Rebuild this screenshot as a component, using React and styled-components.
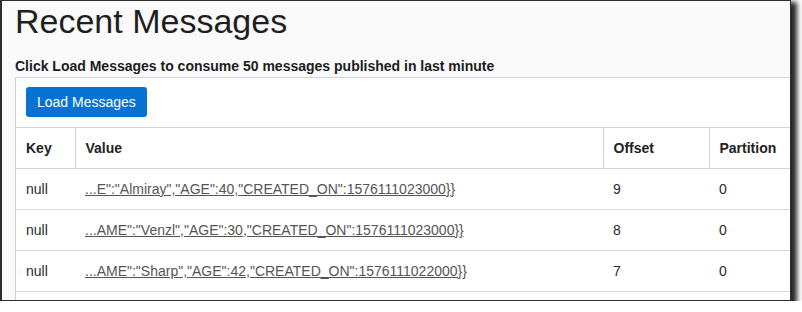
import React from 'react';
import styled, { createGlobalStyle } from 'styled-components';

const GlobalStyle = createGlobalStyle`
    html, body {
        margin: 0;
        padding: 0;
        background: #ffffff;
        font-family: "Liberation Sans", Arial, Helvetica, sans-serif;
    }
`;

const messages = [
    { key: 'null', value: '...E":"Almiray","AGE":40,"CREATED_ON":1576111023000}}', offset: 9, partition: 0 },
    { key: 'null', value: '...AME":"Venzl","AGE":30,"CREATED_ON":1576111023000}}', offset: 8, partition: 0 },
    { key: 'null', value: '...AME":"Sharp","AGE":42,"CREATED_ON":1576111022000}}', offset: 7, partition: 0 }
];

const columns = [
    { label: 'Key', width: 59 },
    { label: 'Value', width: 528 },
    { label: 'Offset', width: 106 },
    { label: 'Partition', width: 106 }
];

const App = () => {
    return (
        <>
            <GlobalStyle />
            <Frame>
                <Page>
                    <Title>Recent Messages</Title>
                    <Lead>Click Load Messages to consume 50 messages published in last minute</Lead>
                    <Card>
                        <Toolbar>
                            <PrimaryButton type="button">Load Messages</PrimaryButton>
                        </Toolbar>
                        <Table>
                            <colgroup>
                                {columns.map(({ label, width }) => <col key={label} style={{ width }} />)}
                            </colgroup>
                            <thead>
                                <tr>
                                    {columns.map(({ label }) => <HeadCell key={label}>{label}</HeadCell>)}
                                </tr>
                            </thead>
                            <tbody>
                                {
                                    messages.map((m) => (
                                        <Row key={m.offset}>
                                            <Cell>{m.key}</Cell>
                                            <Cell><ValueLink href="#">{m.value}</ValueLink></Cell>
                                            <Cell>{m.offset}</Cell>
                                            <Cell>{m.partition}</Cell>
                                        </Row>
                                    ))
                                }
                            </tbody>
                        </Table>
                    </Card>
                </Page>
            </Frame>
        </>
    );
};

const Frame = styled.div`
    box-sizing: border-box;
    width: 791px;
    height: 301px;
    border: 1px solid #2e2e2e;
    border-left-width: 2px;
    box-shadow: 4px 4px 5px 2px rgba(0, 0, 0, 0.85);
    overflow: hidden;
`;

const Page = styled.div`
    height: 100%;
    background: #fafafa;
    padding: 0 0 0 13px;
    color: #222;
`;

const Title = styled.h1`
    margin: 0 0 14px;
    font-size: 34px;
    line-height: 1.2;
    font-weight: 400;
    color: #1f1f1f;
`;

const Lead = styled.p`
    margin: 0;
    font-size: 14px;
    line-height: 21px;
    font-weight: 700;
    color: #1c1c1c;
`;

const Card = styled.div`
    width: 900px;
    min-height: 260px;
    background: #ffffff;
    border: 1px solid #cfd4da;
`;

const Toolbar = styled.div`
    padding: 9px 10px 10px;
`;

const PrimaryButton = styled.button`
    display: inline-block;
    font-family: inherit;
    font-size: 14px;
    line-height: 20px;
    padding: 5px 11px;
    color: #fff;
    background: #0672d3;
    border: none;
    border-radius: 3px;
`;

const Table = styled.table`
    border-collapse: collapse;
    table-layout: fixed;
    width: 799px;
    font-size: 14px;
    line-height: 20px;
`;

const HeadCell = styled.th`
    text-align: left;
    font-weight: 700;
    color: #222;
    padding: 10px;
    border-top: 1px solid #cfd4da;
    border-bottom: 1px solid #cfd4da;
    border-left: 1px solid #cfd4da;

    &:first-child {
        border-left: none;
    }
`;

const Row = styled.tr`
    border-bottom: 1px solid #d6d9de;
`;

const Cell = styled.td`
    padding: 10px;
    color: #2a2a2a;
    white-space: nowrap;
`;

const ValueLink = styled.a`
    color: #555555;
    text-decoration: underline;
`;

export default App;
